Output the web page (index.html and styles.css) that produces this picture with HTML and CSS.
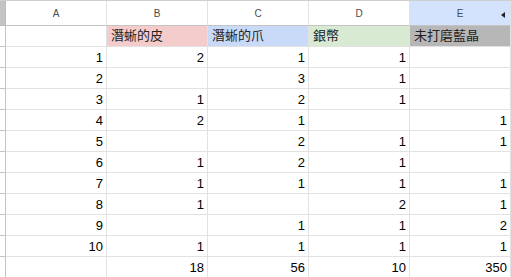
FILE: index.html
```html
<!DOCTYPE html>
<html lang="zh-Hant">
<head>
<meta charset="utf-8">
<title>Sheet</title>
<link rel="stylesheet" href="styles.css">
</head>
<body>
<div class="sheet">
  <div class="corner"></div>
  <div class="colhead">A</div>
  <div class="colhead">B</div>
  <div class="colhead">C</div>
  <div class="colhead">D</div>
  <div class="colhead selected">E</div>

  <div class="rowhead"></div>
  <div class="cell"></div>
  <div class="cell txt fill-red">潛蜥的皮</div>
  <div class="cell txt fill-blue">潛蜥的爪</div>
  <div class="cell txt fill-green">銀幣</div>
  <div class="cell txt fill-gray">未打磨藍晶</div>

  <div class="rowhead"></div>
  <div class="cell num">1</div><div class="cell num">2</div><div class="cell num">1</div><div class="cell num">1</div><div class="cell num"></div>

  <div class="rowhead"></div>
  <div class="cell num">2</div><div class="cell num"></div><div class="cell num">3</div><div class="cell num">1</div><div class="cell num"></div>

  <div class="rowhead"></div>
  <div class="cell num">3</div><div class="cell num">1</div><div class="cell num">2</div><div class="cell num">1</div><div class="cell num"></div>

  <div class="rowhead"></div>
  <div class="cell num">4</div><div class="cell num">2</div><div class="cell num">1</div><div class="cell num"></div><div class="cell num">1</div>

  <div class="rowhead"></div>
  <div class="cell num">5</div><div class="cell num"></div><div class="cell num">2</div><div class="cell num">1</div><div class="cell num">1</div>

  <div class="rowhead"></div>
  <div class="cell num">6</div><div class="cell num">1</div><div class="cell num">2</div><div class="cell num">1</div><div class="cell num"></div>

  <div class="rowhead"></div>
  <div class="cell num">7</div><div class="cell num">1</div><div class="cell num">1</div><div class="cell num">1</div><div class="cell num">1</div>

  <div class="rowhead"></div>
  <div class="cell num">8</div><div class="cell num">1</div><div class="cell num"></div><div class="cell num">2</div><div class="cell num">1</div>

  <div class="rowhead"></div>
  <div class="cell num">9</div><div class="cell num"></div><div class="cell num">1</div><div class="cell num">1</div><div class="cell num">2</div>

  <div class="rowhead"></div>
  <div class="cell num">10</div><div class="cell num">1</div><div class="cell num">1</div><div class="cell num">1</div><div class="cell num">1</div>

  <div class="rowhead"></div>
  <div class="cell num"></div><div class="cell num">18</div><div class="cell num">56</div><div class="cell num">10</div><div class="cell num">350</div>
</div>
</body>
</html>
```

FILE: styles.css
```css
* {
  box-sizing: border-box;
}

html, body {
  margin: 0;
  padding: 0;
  background: #ffffff;
}

body {
  font-family: "Liberation Sans", Arial, "Noto Sans CJK TC", sans-serif;
  overflow: hidden;
}

.sheet {
  display: grid;
  grid-template-columns: 6px repeat(5, 101px);
  grid-template-rows: 25px;
  grid-auto-rows: 21px;
  border-top: 1px solid #cfcfcf;
  width: 511px;
}

.corner {
  background: #c4c4c4;
  border-right: 1px solid #bdbdbd;
  border-bottom: 1px solid #bdbdbd;
}

.colhead {
  border-right: 1px solid #e2e2e2;
  border-bottom: 1px solid #c4c4c4;
  text-align: center;
  font-size: 10px;
  line-height: 25px;
  color: #4a4a4a;
}

.colhead.selected {
  position: relative;
  background: #d3e3fd;
}

.colhead.selected::after {
  content: "";
  position: absolute;
  right: 5px;
  top: 11px;
  border-top: 3px solid transparent;
  border-bottom: 3px solid transparent;
  border-right: 4px solid #222;
}

.rowhead {
  border-right: 1px solid #c4c4c4;
  border-bottom: 1px solid #c4c4c4;
}

.cell {
  border-right: 1px solid #e2e2e2;
  border-bottom: 1px solid #e2e2e2;
  overflow: hidden;
  white-space: nowrap;
  font-size: 13px;
  color: #000;
}

.num {
  text-align: right;
  padding-right: 3px;
  line-height: 22px;
}

.txt {
  padding-left: 4px;
  font-family: "Liberation Sans", "Noto Sans CJK TC", sans-serif;
  line-height: 20px;
  color: #222;
}

.fill-red {
  background: #f4cccc;
}

.fill-blue {
  background: #c9daf8;
}

.fill-green {
  background: #d9ead3;
}

.fill-gray {
  background: #b7b7b7;
}
```
